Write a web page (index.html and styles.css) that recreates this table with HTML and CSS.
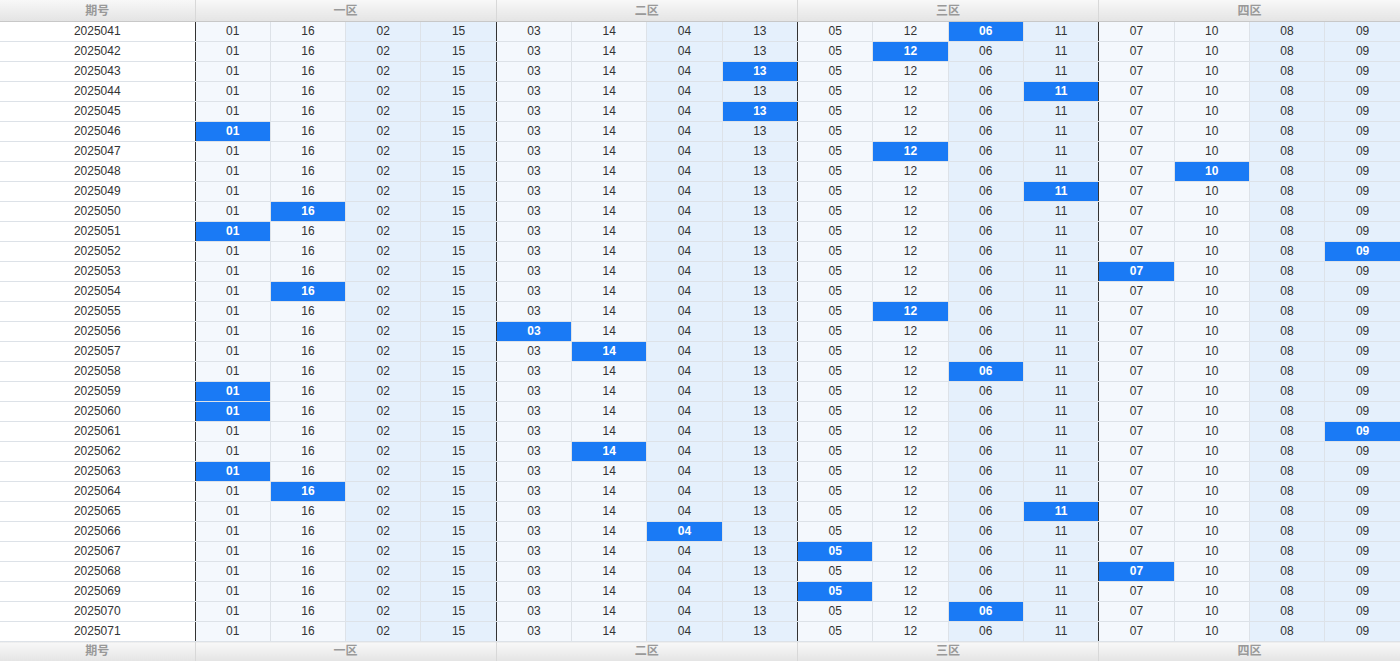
FILE: index.html
```html
<!DOCTYPE html>
<html lang="zh">
<head>
<meta charset="utf-8">
<title>走势</title>
<link rel="stylesheet" href="styles.css">
</head>
<body>
<table class="trend">
<colgroup><col class="c-no"><col span="16"></colgroup>
<thead>
<tr><th>期号</th><th colspan="4">一区</th><th colspan="4">二区</th><th colspan="4">三区</th><th colspan="4">四区</th></tr>
</thead>
<tbody>
<tr><td>2025041</td><td>01</td><td>16</td><td>02</td><td>15</td><td>03</td><td>14</td><td>04</td><td>13</td><td>05</td><td>12</td><td class="hit">06</td><td>11</td><td>07</td><td>10</td><td>08</td><td>09</td></tr>
<tr><td>2025042</td><td>01</td><td>16</td><td>02</td><td>15</td><td>03</td><td>14</td><td>04</td><td>13</td><td>05</td><td class="hit">12</td><td>06</td><td>11</td><td>07</td><td>10</td><td>08</td><td>09</td></tr>
<tr><td>2025043</td><td>01</td><td>16</td><td>02</td><td>15</td><td>03</td><td>14</td><td>04</td><td class="hit">13</td><td>05</td><td>12</td><td>06</td><td>11</td><td>07</td><td>10</td><td>08</td><td>09</td></tr>
<tr><td>2025044</td><td>01</td><td>16</td><td>02</td><td>15</td><td>03</td><td>14</td><td>04</td><td>13</td><td>05</td><td>12</td><td>06</td><td class="hit">11</td><td>07</td><td>10</td><td>08</td><td>09</td></tr>
<tr><td>2025045</td><td>01</td><td>16</td><td>02</td><td>15</td><td>03</td><td>14</td><td>04</td><td class="hit">13</td><td>05</td><td>12</td><td>06</td><td>11</td><td>07</td><td>10</td><td>08</td><td>09</td></tr>
<tr><td>2025046</td><td class="hit">01</td><td>16</td><td>02</td><td>15</td><td>03</td><td>14</td><td>04</td><td>13</td><td>05</td><td>12</td><td>06</td><td>11</td><td>07</td><td>10</td><td>08</td><td>09</td></tr>
<tr><td>2025047</td><td>01</td><td>16</td><td>02</td><td>15</td><td>03</td><td>14</td><td>04</td><td>13</td><td>05</td><td class="hit">12</td><td>06</td><td>11</td><td>07</td><td>10</td><td>08</td><td>09</td></tr>
<tr><td>2025048</td><td>01</td><td>16</td><td>02</td><td>15</td><td>03</td><td>14</td><td>04</td><td>13</td><td>05</td><td>12</td><td>06</td><td>11</td><td>07</td><td class="hit">10</td><td>08</td><td>09</td></tr>
<tr><td>2025049</td><td>01</td><td>16</td><td>02</td><td>15</td><td>03</td><td>14</td><td>04</td><td>13</td><td>05</td><td>12</td><td>06</td><td class="hit">11</td><td>07</td><td>10</td><td>08</td><td>09</td></tr>
<tr><td>2025050</td><td>01</td><td class="hit">16</td><td>02</td><td>15</td><td>03</td><td>14</td><td>04</td><td>13</td><td>05</td><td>12</td><td>06</td><td>11</td><td>07</td><td>10</td><td>08</td><td>09</td></tr>
<tr><td>2025051</td><td class="hit">01</td><td>16</td><td>02</td><td>15</td><td>03</td><td>14</td><td>04</td><td>13</td><td>05</td><td>12</td><td>06</td><td>11</td><td>07</td><td>10</td><td>08</td><td>09</td></tr>
<tr><td>2025052</td><td>01</td><td>16</td><td>02</td><td>15</td><td>03</td><td>14</td><td>04</td><td>13</td><td>05</td><td>12</td><td>06</td><td>11</td><td>07</td><td>10</td><td>08</td><td class="hit">09</td></tr>
<tr><td>2025053</td><td>01</td><td>16</td><td>02</td><td>15</td><td>03</td><td>14</td><td>04</td><td>13</td><td>05</td><td>12</td><td>06</td><td>11</td><td class="hit">07</td><td>10</td><td>08</td><td>09</td></tr>
<tr><td>2025054</td><td>01</td><td class="hit">16</td><td>02</td><td>15</td><td>03</td><td>14</td><td>04</td><td>13</td><td>05</td><td>12</td><td>06</td><td>11</td><td>07</td><td>10</td><td>08</td><td>09</td></tr>
<tr><td>2025055</td><td>01</td><td>16</td><td>02</td><td>15</td><td>03</td><td>14</td><td>04</td><td>13</td><td>05</td><td class="hit">12</td><td>06</td><td>11</td><td>07</td><td>10</td><td>08</td><td>09</td></tr>
<tr><td>2025056</td><td>01</td><td>16</td><td>02</td><td>15</td><td class="hit">03</td><td>14</td><td>04</td><td>13</td><td>05</td><td>12</td><td>06</td><td>11</td><td>07</td><td>10</td><td>08</td><td>09</td></tr>
<tr><td>2025057</td><td>01</td><td>16</td><td>02</td><td>15</td><td>03</td><td class="hit">14</td><td>04</td><td>13</td><td>05</td><td>12</td><td>06</td><td>11</td><td>07</td><td>10</td><td>08</td><td>09</td></tr>
<tr><td>2025058</td><td>01</td><td>16</td><td>02</td><td>15</td><td>03</td><td>14</td><td>04</td><td>13</td><td>05</td><td>12</td><td class="hit">06</td><td>11</td><td>07</td><td>10</td><td>08</td><td>09</td></tr>
<tr><td>2025059</td><td class="hit">01</td><td>16</td><td>02</td><td>15</td><td>03</td><td>14</td><td>04</td><td>13</td><td>05</td><td>12</td><td>06</td><td>11</td><td>07</td><td>10</td><td>08</td><td>09</td></tr>
<tr><td>2025060</td><td class="hit">01</td><td>16</td><td>02</td><td>15</td><td>03</td><td>14</td><td>04</td><td>13</td><td>05</td><td>12</td><td>06</td><td>11</td><td>07</td><td>10</td><td>08</td><td>09</td></tr>
<tr><td>2025061</td><td>01</td><td>16</td><td>02</td><td>15</td><td>03</td><td>14</td><td>04</td><td>13</td><td>05</td><td>12</td><td>06</td><td>11</td><td>07</td><td>10</td><td>08</td><td class="hit">09</td></tr>
<tr><td>2025062</td><td>01</td><td>16</td><td>02</td><td>15</td><td>03</td><td class="hit">14</td><td>04</td><td>13</td><td>05</td><td>12</td><td>06</td><td>11</td><td>07</td><td>10</td><td>08</td><td>09</td></tr>
<tr><td>2025063</td><td class="hit">01</td><td>16</td><td>02</td><td>15</td><td>03</td><td>14</td><td>04</td><td>13</td><td>05</td><td>12</td><td>06</td><td>11</td><td>07</td><td>10</td><td>08</td><td>09</td></tr>
<tr><td>2025064</td><td>01</td><td class="hit">16</td><td>02</td><td>15</td><td>03</td><td>14</td><td>04</td><td>13</td><td>05</td><td>12</td><td>06</td><td>11</td><td>07</td><td>10</td><td>08</td><td>09</td></tr>
<tr><td>2025065</td><td>01</td><td>16</td><td>02</td><td>15</td><td>03</td><td>14</td><td>04</td><td>13</td><td>05</td><td>12</td><td>06</td><td class="hit">11</td><td>07</td><td>10</td><td>08</td><td>09</td></tr>
<tr><td>2025066</td><td>01</td><td>16</td><td>02</td><td>15</td><td>03</td><td>14</td><td class="hit">04</td><td>13</td><td>05</td><td>12</td><td>06</td><td>11</td><td>07</td><td>10</td><td>08</td><td>09</td></tr>
<tr><td>2025067</td><td>01</td><td>16</td><td>02</td><td>15</td><td>03</td><td>14</td><td>04</td><td>13</td><td class="hit">05</td><td>12</td><td>06</td><td>11</td><td>07</td><td>10</td><td>08</td><td>09</td></tr>
<tr><td>2025068</td><td>01</td><td>16</td><td>02</td><td>15</td><td>03</td><td>14</td><td>04</td><td>13</td><td>05</td><td>12</td><td>06</td><td>11</td><td class="hit">07</td><td>10</td><td>08</td><td>09</td></tr>
<tr><td>2025069</td><td>01</td><td>16</td><td>02</td><td>15</td><td>03</td><td>14</td><td>04</td><td>13</td><td class="hit">05</td><td>12</td><td>06</td><td>11</td><td>07</td><td>10</td><td>08</td><td>09</td></tr>
<tr><td>2025070</td><td>01</td><td>16</td><td>02</td><td>15</td><td>03</td><td>14</td><td>04</td><td>13</td><td>05</td><td>12</td><td class="hit">06</td><td>11</td><td>07</td><td>10</td><td>08</td><td>09</td></tr>
<tr><td>2025071</td><td>01</td><td>16</td><td>02</td><td>15</td><td>03</td><td>14</td><td>04</td><td>13</td><td>05</td><td>12</td><td>06</td><td>11</td><td>07</td><td>10</td><td>08</td><td>09</td></tr>
</tbody>
<tfoot>
<tr><th>期号</th><th colspan="4">一区</th><th colspan="4">二区</th><th colspan="4">三区</th><th colspan="4">四区</th></tr>
</tfoot>
</table>
</body>
</html>
```
FILE: styles.css
```css
html, body {
  margin: 0;
  padding: 0;
  background: #ffffff;
}

.trend {
  width: 1400px;
  table-layout: fixed;
  border-collapse: collapse;
  font-family: "Liberation Sans", Arial, "Noto Sans CJK SC", sans-serif;
  font-size: 12px;
  color: #333333;
}

.trend .c-no {
  width: 195px;
}

.trend th {
  padding: 0;
  font-family: "Liberation Sans", "Noto Sans CJK SC", sans-serif;
  font-weight: bold;
  font-size: 12px;
  color: #999999;
  background: linear-gradient(#f8f8f8, #e4e4e4);
  border-left: 1px solid #d8d8d8;
  border-right: 1px solid #d8d8d8;
  text-align: center;
}

.trend thead tr {
  height: 21px;
}

.trend thead th {
  height: 21px;
  line-height: 20px;
  border-bottom: 1px solid #c8c8c8;
}

.trend tfoot th {
  height: 19px;
  line-height: 19px;
  border-top: 1px solid #d0d0d0;
}

.trend th:first-child {
  border-left: none;
}

.trend th:last-child {
  border-right: none;
}

.trend td {
  height: 19px;
  padding: 0;
  line-height: 19px;
  text-align: center;
  border: 1px solid #dde2e8;
  background: #ffffff;
}

.trend td:nth-child(4n+2),
.trend td:nth-child(4n+3) {
  background: #f4f8fd;
}

.trend td:nth-child(4n+4),
.trend td:nth-child(4n+5) {
  background: #e5f0fc;
}

.trend td:nth-child(4n+2) {
  border-left: 1px solid #333333;
}

.trend td:nth-child(4n+1) {
  border-right: 1px solid #333333;
}

.trend td:first-child {
  border-left: none;
}

.trend td:last-child {
  border-right: none;
}

.trend td.hit {
  background: #1a7af5;
  color: #ffffff;
  font-weight: bold;
}
```
